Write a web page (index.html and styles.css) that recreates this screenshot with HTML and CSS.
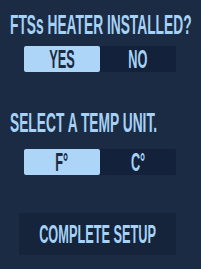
FILE: index.html
```html
<!DOCTYPE html>
<html>
<head>
<meta charset="utf-8">
<link rel="stylesheet" href="styles.css">
</head>
<body>
<div class="screen">
  <div class="title"><span class="sq">FTSs HEATER INSTALLED?</span></div>
  <div class="toggle t1">
    <div class="opt on"><span class="sq">YES</span></div>
    <div class="opt"><span class="sq">NO</span></div>
  </div>
  <div class="title t2"><span class="sq">SELECT A TEMP UNIT.</span></div>
  <div class="toggle t3">
    <div class="opt on"><span class="sq">F°</span></div>
    <div class="opt"><span class="sq">C°</span></div>
  </div>
  <div class="complete"><span class="sq">COMPLETE SETUP</span></div>
</div>
</body>
</html>
```
FILE: styles.css
```css
html, body {
  margin: 0;
  padding: 0;
  background: #1b2b43;
}
body {
  width: 201px;
  height: 269px;
  overflow: hidden;
  font-family: "Liberation Sans", Arial, sans-serif;
  font-weight: bold;
  color: #a6d2f6;
}
.screen {
  width: 201px;
  height: 269px;
  overflow: hidden;
  display: flex;
  flex-direction: column;
  padding-top: 11px;
  box-sizing: border-box;
}
.sq {
  display: inline-block;
  transform: scaleX(0.51);
  white-space: nowrap;
}
.title {
  margin-left: 10px;
  width: 190px;
  height: 28px;
  line-height: 28px;
  font-size: 27px;
  white-space: nowrap;
  overflow: hidden;
}
.title .sq { transform-origin: left center; }
.t2 { margin-top: 37px; }
.toggle {
  margin-left: 24px;
  width: 152px;
  height: 26px;
  display: flex;
  background: #14213a;
  border-radius: 2px;
}
.t1 { margin-top: 7px; }
.t3 { margin-top: 12px; }
.opt {
  flex: 1;
  display: flex;
  align-items: center;
  justify-content: center;
  font-size: 25px;
  line-height: 26px;
  overflow: hidden;
  color: #a6d2f6;
}
.opt.on {
  background: #acd5f7;
  color: #1b2a40;
  border-radius: 2px;
}
.complete {
  margin-top: 38px;
  margin-left: 19px;
  width: 157px;
  height: 42px;
  background: #15233b;
  display: flex;
  align-items: center;
  justify-content: center;
  font-size: 25px;
  overflow: hidden;
  color: #a6d2f6;
}
```
